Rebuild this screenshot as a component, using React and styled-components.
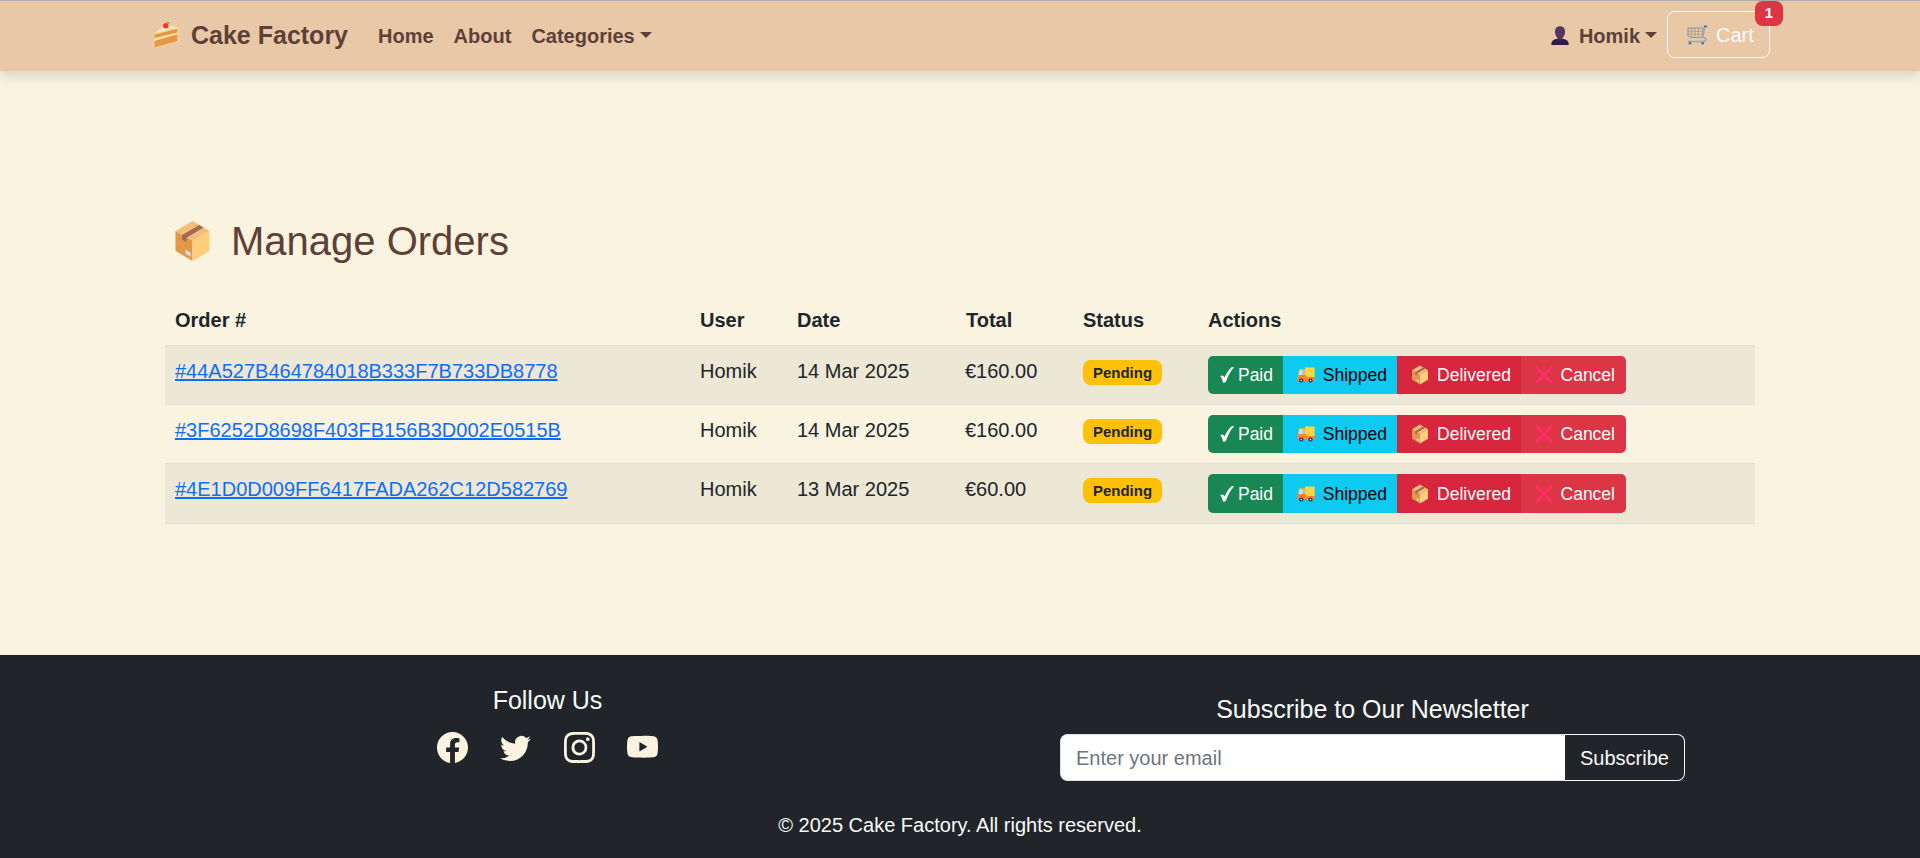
import React from "react";
import styled, { createGlobalStyle } from "styled-components";
import { BsFacebook, BsTwitter, BsInstagram, BsYoutube } from "react-icons/bs";

const GlobalStyle = createGlobalStyle`
  *, *::before, *::after { box-sizing: border-box; }
  body {
    margin: 0;
    background: #faf3e0;
    color: #212529;
    font-family: "Liberation Sans", Arial, sans-serif;
    font-size: 20px;
    line-height: 30px;
    overflow-x: hidden;
  }
  button, input { font-family: inherit; }
`;

const Page = styled.div`
  display: flex;
  flex-direction: column;
  height: 858px;
`;

const Navbar = styled.header`
  flex: none;
  height: 71px;
  border-top: 1px solid #abadb0;
  background: #e8c8a7;
  box-shadow: 0 5px 12px rgba(0, 0, 0, 0.13);
`;

const NavInner = styled.div`
  width: 1620px;
  height: 100%;
  margin: 0 auto;
  display: flex;
  align-items: center;
`;

const Brand = styled.a`
  display: flex;
  align-items: center;
  gap: 12px;
  padding-left: 4px;
  margin-right: 20px;
  margin-bottom: 2px;
  color: #5d4037;
  font-size: 25px;
  font-weight: 700;
  white-space: nowrap;
`;

const NavLink = styled.a`
  display: flex;
  align-items: center;
  padding: 0 10px;
  color: #5d4037;
  font-weight: 700;
  white-space: nowrap;

  svg { margin-right: 10px; }
`;

const Caret = styled.span`
  margin-left: 5px;
  margin-bottom: 2px;
  border-top: 6px solid currentColor;
  border-left: 6px solid transparent;
  border-right: 6px solid transparent;
`;

const Spacer = styled.div`
  flex: 1;
`;

const CartButton = styled.button`
  position: relative;
  display: flex;
  align-items: center;
  gap: 8px;
  width: 103px;
  height: 47px;
  margin-bottom: 3px;
  padding: 0 0 0 19px;
  border: 1px solid #f8f9fa;
  border-radius: 7.5px;
  background: transparent;
  color: #f8f9fa;
  font-size: 20px;
  line-height: 30px;
`;

const CartCount = styled.span`
  position: absolute;
  top: -11px;
  right: -14px;
  width: 28px;
  height: 25px;
  border-radius: 7.5px;
  background: #dc3545;
  color: #fff;
  font-size: 15px;
  font-weight: 700;
  line-height: 24px;
  text-align: center;
`;

const Main = styled.main`
  flex: none;
  width: 1590px;
  height: 584px;
  margin: 0 auto;
  padding-top: 146px;
`;

const Title = styled.h1`
  display: flex;
  align-items: center;
  gap: 21px;
  margin: 0 0 30px;
  padding-left: 10px;
  color: #5d4037;
  font-size: 40px;
  font-weight: 400;
  line-height: 48px;
`;

const OrdersTable = styled.table`
  width: 100%;
  table-layout: fixed;
  border-collapse: separate;
  border-spacing: 0;
`;

const Col = styled.col`
  width: ${(p) => p.$width}px;
`;

const HeadCell = styled.th`
  height: 51px;
  padding: 10px 0 10px ${(p) => (p.$inset ? 11 : 10)}px;
  border-bottom: 1px solid #dee2e6;
  text-align: left;
`;

const Row = styled.tr`
  height: ${(p) => (p.$last ? 60 : 59)}px;
  background: ${(p) => (p.$striped ? "#ede7d5" : "transparent")};
`;

const Cell = styled.td`
  padding: 10px 0 0 10px;
  border-bottom: 1px solid #dee2e6;
  vertical-align: top;
  white-space: nowrap;
`;

const OrderLink = styled.a`
  color: #0d6efd;
  text-decoration: underline;
`;

const StatusBadge = styled.span`
  display: block;
  width: 79px;
  height: 25px;
  margin-top: 4px;
  border-radius: 7.5px;
  background: #ffc107;
  color: #212529;
  font-size: 15px;
  font-weight: 700;
  line-height: 25px;
  text-align: center;
`;

const ButtonGroup = styled.div`
  display: flex;
  height: ${(p) => (p.$tall ? 39 : 38)}px;
`;

const tones = {
  paid: ["#198754", "#fff"],
  shipped: ["#0dcaf0", "#000"],
  delivered: ["#d7263d", "#fff"],
  cancel: ["#dc3545", "#fff"],
};

const ActionButton = styled.button`
  display: flex;
  align-items: center;
  justify-content: flex-end;
  width: ${(p) => p.$width}px;
  padding: 0 ${(p) => p.$end || 10}px 0 0;
  border: 0;
  background: ${(p) => tones[p.$tone][0]};
  color: ${(p) => tones[p.$tone][1]};
  font-size: 17.5px;
  line-height: 26px;

  svg { margin-right: ${(p) => p.$gap}px; }
  &:first-child { border-radius: 5px 0 0 5px; }
  &:last-child { border-radius: 0 5px 5px 0; }
`;

const Footer = styled.footer`
  flex: 1;
  padding-top: 30px;
  background: #212529;
  color: #f8f9fa;
`;

const FooterColumns = styled.div`
  display: grid;
  grid-template-columns: 825px 825px;
  justify-content: center;
  height: 125px;
`;

const FooterColumn = styled.section`
  display: flex;
  flex-direction: column;
  align-items: center;
  padding-top: ${(p) => p.$offset || 0}px;
`;

const FooterTitle = styled.h5`
  margin: 0 0 10px;
  font-size: 25px;
  font-weight: 400;
  line-height: 30px;
`;

const Socials = styled.div`
  display: flex;
  gap: 32.4px;
  margin-top: 6.5px;
  color: #faf3e0;
`;

const Newsletter = styled.form`
  display: flex;
  width: 625px;
  height: 47px;
`;

const EmailInput = styled.input`
  flex: 1;
  min-width: 0;
  padding: 1px 15px 0;
  border: 1px solid #dee2e6;
  border-right: 0;
  border-radius: 7.5px 0 0 7.5px;
  background: #fff;
  font-size: 20px;

  &::placeholder { color: #6c757d; opacity: 1; }
`;

const SubscribeButton = styled.button`
  width: 120px;
  padding: 1px 0 0;
  border: 1px solid #f8f9fa;
  border-left: 0;
  border-radius: 0 7.5px 7.5px 0;
  background: transparent;
  color: #f8f9fa;
  font-size: 20px;
`;

const Copyright = styled.p`
  margin: 0;
  text-align: center;
`;

const CakeIcon = () => (
  <svg width="25" height="26" viewBox="0 0 25 26" aria-hidden="true">
    <path d="M.5 11 11 3.500 20 4.500 24.500 6v14L.5 26Z" fill="#ffdfa4" />
    <path d="M.5 11.300 11 4l8 .3 4 1.500Z" fill="#ffe8bb" />
    <path d="M.5 11.500 23.500 6v4.600L.5 16Z" fill="#e39849" />
    <path d="M.5 11.200 23.500 5.700v1L.5 12.500Z" fill="#ffdfa4" />
    <path d="M.5 19 23.500 12.300v7L.5 25.600Z" fill="#e39849" />
    <path d="M12 2.500c.4-2 2-2.500 3.500-1.200" stroke="#73bd32" strokeWidth="1.600" fill="none" />
    <ellipse cx="11.700" cy="3.800" rx="2.700" ry="2.600" fill="#f8312f" />
  </svg>
);

const UserIcon = () => (
  <svg width="18" height="20" viewBox="0 0 18 20" aria-hidden="true">
    <path d="M.2 19c0-4 2.500-6 6-6h5.600c3.500 0 6 2 6 6Z" fill="#321b41" />
    <path d="M6.500 10h5v3.500c0 2-5 2-5 0Z" fill="#46295a" />
    <path d="M9 .3c3.500 0 5 2.300 5 5.200 0 4-2 7.300-5 7.300S4 9.500 4 5.500C4 2.600 5.500.3 9 .3Z" fill="#533566" />
  </svg>
);

const CartIcon = () => (
  <svg width="21" height="20" viewBox="0 0 21 20" fill="none" aria-hidden="true">
    <path d="M1 3.200h15L15 12.500H3.500L1 11Z" stroke="#999" strokeWidth="1.200" />
    <path d="M4.500 3v9.500M8 3v9.500M11.500 3v9.500M1 6.200h15M1.300 9.300h14.500" stroke="#999" strokeWidth=".7" />
    <path d="m18 1.400-2.300 11.100M15.600 12.500c4 0 4 4 1 4H1" stroke="#a5a5a5" strokeWidth="1.500" />
    <path d="M17.700 1.400H19.500" stroke="#0084ce" strokeWidth="1.700" strokeLinecap="round" />
    <circle cx="3" cy="18.300" r="1.300" fill="#0084ce" />
    <circle cx="15.600" cy="18.300" r="1.300" fill="#0084ce" />
  </svg>
);

const BoxIcon = ({ width, height }) => (
  <svg width={width} height={height} viewBox="0 0 34 40" aria-hidden="true">
    <path d="M0 10 17 19.500V40L0 30Z" fill="#e39849" />
    <path d="M17 19.500 34 10v20L17 40Z" fill="#ffce7c" />
    <path d="M17 0 34 10 17 19.800 0 10Z" fill="#f3be7c" />
    <path d="m6.500 14 17.300-10 4.200 2.500L11 16.700v4.500l-4.500-2.600Z" fill="#a56953" />
    <path d="m10 28.500 5.200 3v4.300L10 32.800Z" fill="#d9d9d9" />
  </svg>
);

const CheckIcon = () => (
  <svg width="14" height="16" viewBox="0 0 14 16" aria-hidden="true">
    <path d="M.6 9.500C2 8.200 3.800 9 4.600 11 6.500 6.800 8.500 3.500 11.200.8c.8-.7 1.800-.7 2.500-.5C10.300 4.200 7.500 9 5.800 14.500c-1 1-2 1.100-2.600.7C2.700 12.500 2 10.500.6 9.500Z" fill="#fff" stroke="#fff" strokeWidth=".6" />
  </svg>
);

const TruckIcon = () => (
  <svg width="18" height="16" viewBox="0 0 19 17" aria-hidden="true">
    <path d="M8.500.5h9c.8 0 1.200.5 1.200 1.200V11H8.500Z" fill="#ffd53e" />
    <path d="M3 2.500h5.500V10H.7l1-5.800C1.900 3 2.300 2.500 3 2.500Z" fill="#ffb02e" />
    <path d="M2.500 3.500h3.200V9H1.600Z" fill="#b4e8fa" />
    <path d="M6.500 3.500h2V8h-2Z" fill="#83cbff" />
    <path d="M.5 8.500h8.200l2 2h8v4.500H.5Z" fill="#ff822d" />
    <circle cx="4.500" cy="14.300" r="2.200" fill="#321b41" />
    <circle cx="14.300" cy="14.300" r="2.200" fill="#321b41" />
    <circle cx="4.500" cy="14.300" r="1" fill="#d5c9df" />
    <circle cx="14.300" cy="14.300" r="1" fill="#d5c9df" />
  </svg>
);

const CrossIcon = () => (
  <svg width="18" height="18" viewBox="0 0 18 18" aria-hidden="true">
    <path d="m2 2 14 14M16 2 2 16" stroke="#f92f60" strokeWidth="3.300" strokeLinecap="round" />
  </svg>
);

const orders = [
  { id: "#44A527B464784018B333F7B733DB8778", date: "14 Mar 2025", total: "€160.00" },
  { id: "#3F6252D8698F403FB156B3D002E0515B", date: "14 Mar 2025", total: "€160.00" },
  { id: "#4E1D0D009FF6417FADA262C12D582769", date: "13 Mar 2025", total: "€60.00" },
];

function OrderActions({ tall }) {
  return (
    <ButtonGroup $tall={tall}>
      <ActionButton $tone="paid" $width={75} $gap={4}><CheckIcon />Paid</ActionButton>
      <ActionButton $tone="shipped" $width={114} $gap={8}><TruckIcon />Shipped</ActionButton>
      <ActionButton $tone="delivered" $width={124} $gap={9}><BoxIcon width={16} height={20} />Delivered</ActionButton>
      <ActionButton $tone="cancel" $width={105} $gap={8} $end={11}><CrossIcon />Cancel</ActionButton>
    </ButtonGroup>
  );
}

export default function App() {
  return (
    <Page>
      <GlobalStyle />
      <Navbar>
        <NavInner>
          <Brand><CakeIcon />Cake Factory</Brand>
          <NavLink>Home</NavLink>
          <NavLink>About</NavLink>
          <NavLink>Categories<Caret /></NavLink>
          <Spacer />
          <NavLink><UserIcon />Homik<Caret /></NavLink>
          <CartButton><CartIcon />Cart<CartCount>1</CartCount></CartButton>
        </NavInner>
      </Navbar>
      <Main>
        <Title><BoxIcon width={35} height={40} />Manage Orders</Title>
        <OrdersTable>
          <colgroup>
            {[525, 97, 168, 118, 125, 557].map((width, i) => <Col key={i} $width={width} />)}
          </colgroup>
          <thead>
            <tr>
              {["Order #", "User", "Date", "Total", "Status", "Actions"].map((label) => (
                <HeadCell key={label} $inset={label === "Total"}>{label}</HeadCell>
              ))}
            </tr>
          </thead>
          <tbody>
            {orders.map((order, i) => (
              <Row key={order.id} $striped={i % 2 === 0} $last={i === 2}>
                <Cell><OrderLink>{order.id}</OrderLink></Cell>
                <Cell>Homik</Cell>
                <Cell>{order.date}</Cell>
                <Cell>{order.total}</Cell>
                <Cell><StatusBadge>Pending</StatusBadge></Cell>
                <Cell><OrderActions tall={i === 2} /></Cell>
              </Row>
            ))}
          </tbody>
        </OrdersTable>
      </Main>
      <Footer>
        <FooterColumns>
          <FooterColumn>
            <FooterTitle>Follow Us</FooterTitle>
            <Socials>
              <BsFacebook size={31} />
              <BsTwitter size={31} />
              <BsInstagram size={31} />
              <BsYoutube size={31} />
            </Socials>
          </FooterColumn>
          <FooterColumn $offset={9}>
            <FooterTitle>Subscribe to Our Newsletter</FooterTitle>
            <Newsletter>
              <EmailInput type="email" placeholder="Enter your email" />
              <SubscribeButton type="button">Subscribe</SubscribeButton>
            </Newsletter>
          </FooterColumn>
        </FooterColumns>
        <Copyright>© 2025 Cake Factory. All rights reserved.</Copyright>
      </Footer>
    </Page>
  );
}
